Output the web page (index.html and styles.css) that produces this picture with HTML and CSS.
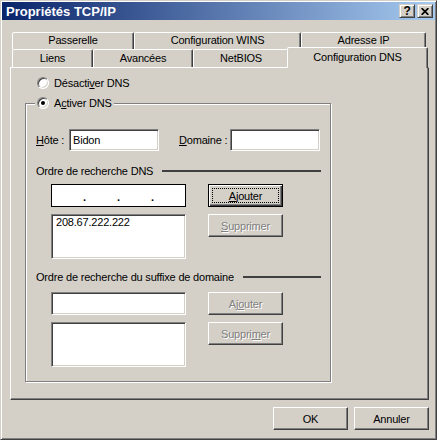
FILE: index.html
```html
<!DOCTYPE html>
<html lang="fr">
<head>
<meta charset="utf-8">
<title>Propriétés TCP/IP</title>
<link rel="stylesheet" href="styles.css">
</head>
<body>
<div class="window">
  <div class="titlebar">
    <span class="title">Propriétés TCP/IP</span>
    <div class="caption-btns">
      <span class="cbtn help">?</span>
      <span class="cbtn close"><svg width="8" height="7" viewBox="0 0 8 7"><path d="M0.6 0.2 L7.4 6.8 M7.4 0.2 L0.6 6.8" stroke="#000" stroke-width="1.8" fill="none"/></svg></span>
    </div>
  </div>
  <div class="content">
    <div class="tabs">
      <div class="tabrow back">
        <div class="tab t-pass">Passerelle</div>
        <div class="tab t-wins">Configuration WINS</div>
        <div class="tab t-ip">Adresse IP</div>
      </div>
      <div class="tabrow front">
        <div class="tab t-liens">Liens</div>
        <div class="tab t-av">Avancées</div>
        <div class="tab t-nb">NetBIOS</div>
        <div class="tab t-dns sel">Configuration DNS</div>
      </div>
    </div>
    <div class="panel">
      <div class="radio"><span class="rb"></span><span>Désacti<u>v</u>er DNS</span></div>
      <div class="group">
        <div class="legend radio"><span class="rb on"></span><span>A<u>c</u>tiver DNS</span></div>
        <div class="hostrow">
          <span class="lbl-host"><u>H</u>ôte :</span>
          <div class="field">Bidon</div>
          <span class="lbl-dom"><u>D</u>omaine :</span>
          <div class="field"></div>
        </div>
        <div class="sect s1"><span>Ordre de recherche DNS</span><span class="line"></span></div>
        <div class="lists g1">
          <div class="ipbox"><span>.</span><span>.</span><span>.</span></div>
          <button class="btn default"><span class="focus"><u>A</u>jouter</span></button>
          <div class="listbox">208.67.222.222</div>
          <button class="btn" disabled><u>S</u>upprimer</button>
        </div>
        <div class="sect s2"><span>Ordre de recherche du suffixe de domaine</span><span class="line"></span></div>
        <div class="lists g2">
          <div class="field wide"></div>
          <button class="btn" disabled>Aj<u>o</u>uter</button>
          <div class="listbox"></div>
          <button class="btn" disabled>Suppri<u>m</u>er</button>
        </div>
      </div>
    </div>
    <div class="footer">
      <button class="btn">OK</button>
      <button class="btn">Annuler</button>
    </div>
  </div>
</div>
</body>
</html>
```

FILE: styles.css
```css
* { box-sizing: border-box; }
html, body { margin: 0; padding: 0; }
body {
  background: #d4d0c8;
  font-family: "Liberation Sans", Arial, sans-serif;
  font-size: 11px;
  letter-spacing: -0.2px;
  color: #000;
}
.window {
  width: 437px;
  height: 440px;
  background: #d4d0c8;
  border: 1px solid;
  border-color: #d4d0c8 #404040 #404040 #d4d0c8;
  box-shadow: inset 1px 1px #fff, inset -1px -1px #808080;
  padding: 1px;
  display: flex;
  flex-direction: column;
}
.titlebar {
  height: 18px;
  flex: none;
  background: linear-gradient(to right, #0a246a, #a6caf0);
  display: flex;
  align-items: center;
  justify-content: space-between;
  padding: 0 2px 0 4px;
}
.title { color: #fff; font-weight: bold; font-size: 13px; letter-spacing: 0; }
.caption-btns { display: flex; gap: 2px; }
.cbtn {
  width: 16px;
  height: 14px;
  background: #d4d0c8;
  border: 1px solid;
  border-color: #d4d0c8 #404040 #404040 #d4d0c8;
  box-shadow: inset 1px 1px #fff, inset -1px -1px #808080;
  display: flex;
  align-items: center;
  justify-content: center;
  font-weight: bold;
  font-size: 12px;
  line-height: 1;
}
.content {
  flex: 1;
  padding: 12px 6px 0 8px;
  display: flex;
  flex-direction: column;
}
.tabrow { display: flex; align-items: flex-start; margin: 0 2px; }
.tab {
  border: 1px solid;
  border-bottom: 0;
  border-color: #fff #404040 transparent #fff;
  box-shadow: inset -1px 0 #808080;
  border-radius: 2px 2px 0 0;
  text-align: center;
  background: #d4d0c8;
  white-space: nowrap;
}
.back .tab { height: 17px; line-height: 15px; }
.front .tab { height: 18px; line-height: 17px; }
.front .tab.sel {
  height: 21px;
  margin: -2px -2px -1px;
  line-height: 18px;
  position: relative;
  z-index: 1;
}
.t-pass { width: 122px; }
.t-wins { width: 167px; }
.t-ip { width: 125px; }
.t-liens { width: 81px; }
.t-av { width: 100px; }
.t-nb { width: 96px; }
.t-dns { width: 141px; }
.panel {
  height: 333px;
  flex: none;
  border: 1px solid;
  border-color: #fff #404040 #404040 #fff;
  box-shadow: inset -1px -1px #808080;
  padding: 8px 0 0 14px;
}
.radio { display: flex; align-items: center; height: 14px; white-space: nowrap; }
.panel > .radio { margin-left: 12px; }
.rb {
  width: 12px;
  height: 12px;
  flex: none;
  border-radius: 50%;
  background: #fff;
  border: 1px solid;
  border-color: #808080 #fff #fff #808080;
  box-shadow: inset 1px 1px #404040, inset -1px -1px #d4d0c8;
  margin-right: 5px;
  display: flex;
  align-items: center;
  justify-content: center;
}
.rb.on::after {
  content: "";
  width: 4px;
  height: 4px;
  border-radius: 50%;
  background: #000;
}
.group {
  position: relative;
  width: 306px;
  margin-top: 13px;
  border: 1px solid #808080;
  box-shadow: inset 1px 1px #fff, 1px 1px #fff;
  padding: 25px 0 14px 10px;
}
.legend {
  position: absolute;
  top: -8px;
  left: 9px;
  padding: 0 2px;
  background: #d4d0c8;
}
.hostrow { display: flex; align-items: center; height: 22px; }
.lbl-host { width: 33px; }
.lbl-dom { width: 51px; margin-left: 20px; }
.field {
  width: 90px;
  height: 22px;
  background: #fff;
  border: 1px solid;
  border-color: #808080 #fff #fff #808080;
  box-shadow: inset 1px 1px #404040, inset -1px -1px #d4d0c8;
  padding: 0 3px;
  display: flex;
  align-items: center;
}
.field.wide { width: 135px; height: 23px; }
.sect {
  display: flex;
  align-items: center;
  justify-content: space-between;
  height: 14px;
  width: 285px;
  white-space: nowrap;
}
.sect .line { height: 2px; background: #404040; }
.s1 { margin-top: 13px; }
.s1 .line { width: 159px; }
.s2 { margin-top: 11px; }
.s2 .line { width: 78px; }
.lists {
  display: grid;
  grid-template-columns: 135px 75px;
  grid-template-rows: 23px 45px;
  column-gap: 22px;
  row-gap: 7px;
  margin-left: 15px;
  align-items: start;
}
.g1 { margin-top: 6px; }
.g2 { margin-top: 8px; }
.ipbox {
  height: 23px;
  border: 1px solid #000;
  background: #fff;
  display: flex;
  justify-content: space-evenly;
  align-items: center;
  font-weight: bold;
  padding-top: 2px;
}
.listbox {
  height: 45px;
  background: #fff;
  border: 1px solid;
  border-color: #808080 #fff #fff #808080;
  box-shadow: inset 1px 1px #404040, inset -1px -1px #d4d0c8;
  padding: 1px 4px;
  line-height: 13px;
}
.btn {
  width: 75px;
  height: 23px;
  padding: 0;
  margin: 0;
  font: inherit;
  letter-spacing: inherit;
  color: #000;
  background: #d4d0c8;
  border: 1px solid;
  border-color: #fff #404040 #404040 #fff;
  box-shadow: inset -1px -1px #808080;
  display: flex;
  align-items: center;
  justify-content: center;
  appearance: none;
}
.btn.default {
  border-color: #000;
  box-shadow: inset 1px 1px #fff, inset -1px -1px #404040, inset -2px -2px #808080;
  padding: 3px;
  align-items: stretch;
}
.btn.default .focus {
  flex: 1;
  border: 1px dotted #000;
  display: flex;
  align-items: center;
  justify-content: center;
}
.btn:disabled { color: #808080; text-shadow: 1px 1px 0 #fff; }
.footer { display: flex; justify-content: flex-end; gap: 6px; margin-top: 7px; }
```
